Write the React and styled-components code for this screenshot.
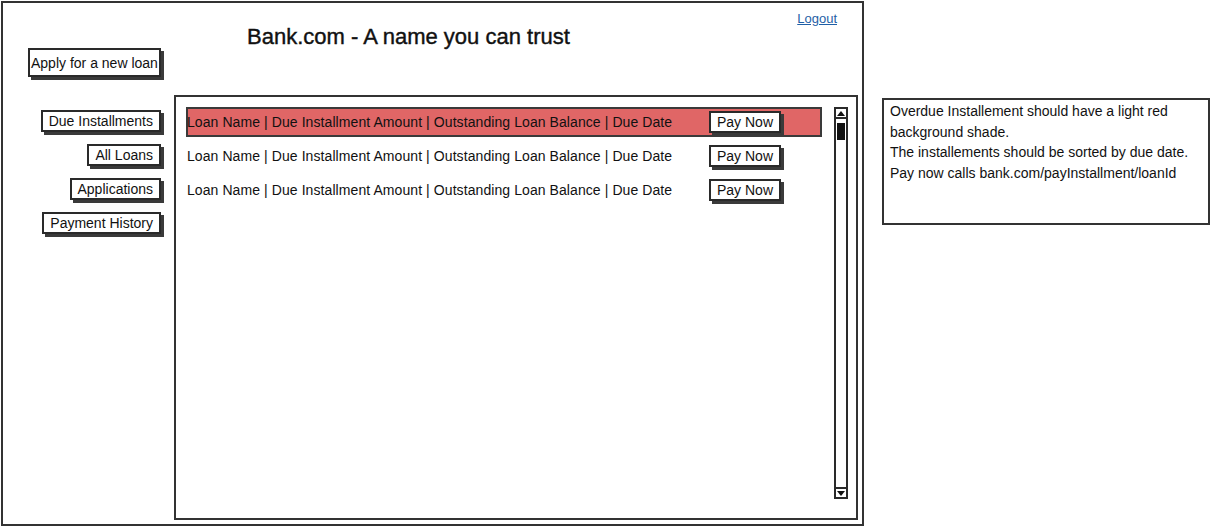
import React from "react";
import styled, { createGlobalStyle } from "styled-components";

const GlobalStyle = createGlobalStyle`
  html, body {
    margin: 0;
    padding: 0;
    background: #ffffff;
  }
  body {
    font-family: "Liberation Sans", Arial, sans-serif;
    color: #1a1a1a;
  }
`;

const Page = styled.div`
  display: flex;
  align-items: flex-start;
  gap: 18px;
  padding: 1px;
`;

const Frame = styled.div`
  box-sizing: border-box;
  width: 863px;
  height: 525px;
  border: 2px solid #333;
  display: grid;
  grid-template-columns: 171px 1fr;
  grid-template-rows: 92px 1fr;
`;

const HeaderLeft = styled.div`
  padding: 45px 0 0 25px;
`;

const HeaderRight = styled.div`
  display: flex;
  justify-content: space-between;
  align-items: flex-start;
  padding: 0 25px 0 73px;
`;

const Title = styled.h1`
  margin: 22px 0 0;
  font-size: 22px;
  font-weight: normal;
  line-height: 24px;
  color: #111;
  -webkit-text-stroke: 0.4px #111;
`;

const Logout = styled.a`
  margin-top: 8px;
  font-size: 13px;
  line-height: 16px;
  color: #1f5fa6;
  text-decoration: underline;
  cursor: pointer;
`;

const SketchButton = styled.button`
  box-sizing: border-box;
  height: ${(p) => (p.$tall ? "29px" : "22px")};
  padding: ${(p) => (p.$tall ? "0 1px" : "0 6px")};
  font-family: inherit;
  font-size: 14px;
  color: #111;
  background: #fff;
  border: 2px solid #2a2a2a;
  box-shadow: 3px 3px 0 #3a3a3a;
  white-space: nowrap;
  cursor: pointer;
`;

const Sidebar = styled.nav`
  display: flex;
  flex-direction: column;
  align-items: flex-end;
  gap: 12px;
  padding: 15px 13px 0 0;
`;

const Panel = styled.div`
  box-sizing: border-box;
  margin: 0 4px 4px 0;
  border: 2px solid #333;
  display: flex;
  padding: 10px 8px 19px 10px;
  gap: 12px;
`;

const List = styled.div`
  flex: 1;
  display: flex;
  flex-direction: column;
  gap: 4px;
`;

const Row = styled.div`
  box-sizing: border-box;
  height: 30px;
  display: grid;
  grid-template-columns: 521px auto;
  align-items: center;
  border: 2px solid ${(p) => (p.$overdue ? "#3a3a3a" : "transparent")};
  background: ${(p) => (p.$overdue ? "#e06666" : "transparent")};
`;

const RowText = styled.span`
  margin-left: -1px;
  font-size: 14px;
  letter-spacing: 0.08px;
  color: #111;
  white-space: nowrap;
`;

const PayCell = styled.div`
  display: flex;
  align-items: center;
`;

const Scrollbar = styled.div`
  box-sizing: border-box;
  width: 14px;
  border: 2px solid #2a2a2a;
  display: flex;
  flex-direction: column;
`;

const Arrow = styled.div`
  height: 8px;
  display: flex;
  align-items: center;
  justify-content: center;
  border-${(p) => (p.$down ? "top" : "bottom")}: 2px solid #2a2a2a;

  &::after {
    content: "";
    border-left: 4px solid transparent;
    border-right: 4px solid transparent;
    border-${(p) => (p.$down ? "top" : "bottom")}: 5px solid #111;
  }
`;

const Thumb = styled.div`
  height: 17px;
  margin: 4px 1px 0;
  background: #111;
`;

const Track = styled.div`
  flex: 1;
`;

const Note = styled.div`
  box-sizing: border-box;
  margin-top: 97px;
  width: 328px;
  height: 127px;
  border: 2px solid #333;
  padding: 1px 6px;
  font-size: 14px;
  line-height: 20.5px;
  color: #111;
`;

const rows = [
  { id: 1, overdue: true },
  { id: 2, overdue: false },
  { id: 3, overdue: false },
];

const navItems = ["Due Installments", "All Loans", "Applications", "Payment History"];

export default function App() {
  return (
    <>
      <GlobalStyle />
      <Page>
        <Frame>
          <HeaderLeft>
            <SketchButton $tall>Apply for a new loan</SketchButton>
          </HeaderLeft>
          <HeaderRight>
            <Title>Bank.com - A name you can trust</Title>
            <Logout>Logout</Logout>
          </HeaderRight>
          <Sidebar>
            {navItems.map((item) => (
              <SketchButton key={item}>{item}</SketchButton>
            ))}
          </Sidebar>
          <Panel>
            <List>
              {rows.map((r) => (
                <Row key={r.id} $overdue={r.overdue}>
                  <RowText>
                    Loan Name | Due Installment Amount | Outstanding Loan Balance | Due Date
                  </RowText>
                  <PayCell>
                    <SketchButton>Pay Now</SketchButton>
                  </PayCell>
                </Row>
              ))}
            </List>
            <Scrollbar>
              <Arrow />
              <Thumb />
              <Track />
              <Arrow $down />
            </Scrollbar>
          </Panel>
        </Frame>
        <Note>
          Overdue Installement should have a light red background shade.
          <br />
          The installements should be sorted by due date.
          <br />
          Pay now calls bank.com/payInstallment/loanId
        </Note>
      </Page>
    </>
  );
}
